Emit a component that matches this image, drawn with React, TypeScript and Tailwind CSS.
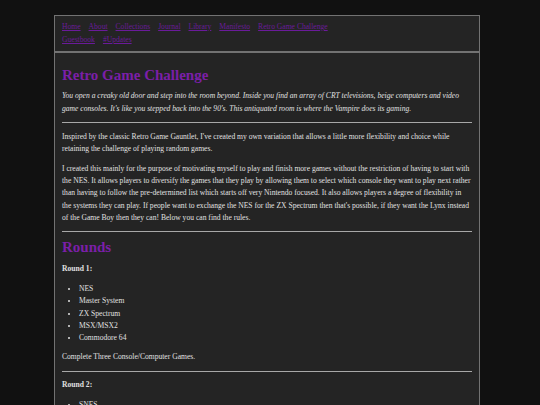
const navTop = ["Home", "About", "Collections", "Journal", "Library", "Manifesto", "Retro Game Challenge"];
const navBottom = ["Guestbook", "#Updates"];

const round1 = ["NES", "Master System", "ZX Spectrum", "MSX/MSX2", "Commodore 64"];
const round2 = ["SNES", "Mega Drive", "Amiga"];

const NavRow = ({ links }: { links: string[] }) => (
  <div className="flex gap-[8px] leading-[12.7px]">
    {links.map((l) => (
      <a key={l} href="#" className="text-[#6a1b9a] underline">
        {l}
      </a>
    ))}
  </div>
);

const Hr = () => <div className="h-px bg-[#a8a8a8]" />;

export default function App() {
  return (
    <div
      className="h-[405px] overflow-hidden bg-[#111111] pt-[15px] text-[7.6px] text-[#e0e0e0]"
      style={{ fontFamily: '"Liberation Serif", "Times New Roman", serif' }}
    >
      <div className="ml-[54px] w-[426px]">
        <nav className="border border-[#727272] bg-[#242424] px-[7px] pt-[5px] pb-[5px]">
          <NavRow links={navTop} />
          <NavRow links={navBottom} />
        </nav>
        <main className="flex flex-col border border-[#727272] bg-[#242424] px-[7px] pt-[13px] leading-[12.35px]">
          <h1 className="text-[15px] font-bold leading-[18px] text-[#7b1fa8]">Retro Game Challenge</h1>
          <p className="mt-[6px] italic">
            You open a creaky old door and step into the room beyond. Inside you find an array of CRT televisions, beige computers and video game consoles. It's like you stepped back into the 90's. This antiquated room is where the Vampire does its gaming.
          </p>
          <div className="mt-[7px] mb-[8px]">
            <Hr />
          </div>
          <p>
            Inspired by the classic Retro Game Gauntlet, I've created my own variation that allows a little more flexibility and choice while retaining the challenge of playing random games.
          </p>
          <p className="mt-[7px]">
            I created this mainly for the purpose of motivating myself to play and finish more games without the restriction of having to start with the NES. It allows players to diversify the games that they play by allowing them to select which console they want to play next rather than having to follow the pre-determined list which starts off very Nintendo focused. It also allows players a degree of flexibility in the systems they can play. If people want to exchange the NES for the ZX Spectrum then that's possible, if they want the Lynx instead of the Game Boy then they can! Below you can find the rules.
          </p>
          <div className="mt-[6px] mb-[6px]">
            <Hr />
          </div>
          <h2 className="text-[15px] font-bold leading-[18px] text-[#7b1fa8]">Rounds</h2>
          <p className="mt-[7.5px] font-bold">Round 1:</p>
          <ul className="mt-[7.5px] list-disc pl-[17px]">
            {round1.map((r) => (
              <li key={r}>{r}</li>
            ))}
          </ul>
          <p className="mt-[6.5px]">Complete Three Console/Computer Games.</p>
          <div className="my-[7.5px]">
            <Hr />
          </div>
          <p className="font-bold">Round 2:</p>
          <ul className="mt-[7.5px] list-disc pl-[17px]">
            {round2.map((r) => (
              <li key={r}>{r}</li>
            ))}
          </ul>
        </main>
      </div>
    </div>
  );
}
